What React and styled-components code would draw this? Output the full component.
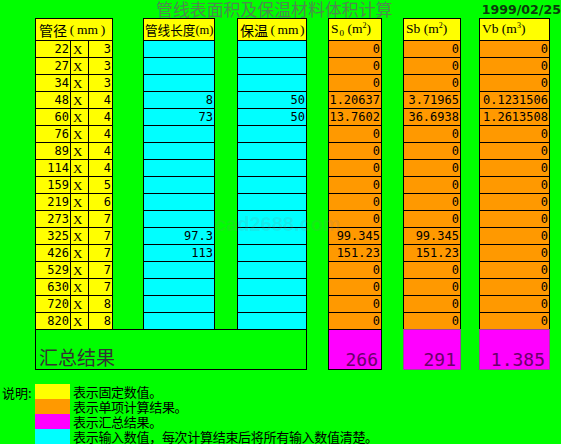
import React from "react";
import styled, { createGlobalStyle } from "styled-components";

const GlobalStyle = createGlobalStyle`
  html, body {
    margin: 0;
    padding: 0;
    background: #00ff00;
    overflow: hidden;
  }
  body {
    width: 561px;
    height: 444px;
    font-family: "Noto Sans CJK SC", sans-serif;
  }
`;

const YELLOW = "#ffff00";
const ORANGE = "#ff9900";
const CYAN = "#00ffff";
const MAGENTA = "#ff00ff";

const pipes = [
  [22, 3], [27, 3], [34, 3], [48, 4], [60, 4], [76, 4], [89, 4], [114, 4],
  [159, 5], [219, 6], [273, 7], [325, 7], [426, 7], [529, 7], [630, 7],
  [720, 8], [820, 8],
];
const lengths = { 3: "8", 4: "73", 11: "97.3", 12: "113" };
const insul = { 3: "50", 4: "50" };
const s0 = { 3: "1.20637", 4: "13.7602", 11: "99.345", 12: "151.23" };
const sb = { 3: "3.71965", 4: "36.6938", 11: "99.345", 12: "151.23" };
const vb = { 3: "0.1231506", 4: "1.2613508" };

const Page = styled.div`
  position: relative;
  width: 561px;
  height: 444px;
`;

const TitleBar = styled.div`
  display: flex;
  align-items: flex-start;
  height: 18px;
`;

const Title = styled.div`
  margin-left: 156px;
  font-size: 16.9px;
  line-height: 18px;
  color: #4f8a4f;
  white-space: nowrap;
`;

const DateText = styled.div`
  margin-left: auto;
  padding-top: 2px;
  font-family: "DejaVu Sans", sans-serif;
  font-weight: bold;
  font-size: 12.6px;
  line-height: 15px;
  color: #0b3b0b;
`;

const Sheet = styled.div`
  display: grid;
  grid-template-columns: 35px 18px 24px 31px 71px 23px 69px 22px 53px 22px 57px 19px 70px;
  grid-template-rows: 22px repeat(17, 17px) 40px;
  margin-left: 35px;
`;

const Cell = styled.div`
  grid-column: ${(p) => p.$col} / span ${(p) => p.$span || 1};
  grid-row: ${(p) => p.$row};
  margin: 0 -1px -1px 0;
  border: 1px solid #000;
  background: ${(p) => p.$bg};
  display: flex;
  align-items: center;
  justify-content: flex-end;
  padding: 0 1px 0 0;
  font-family: "DejaVu Sans Mono", monospace;
  font-size: 12px;
  line-height: 15px;
  color: #000;
  white-space: nowrap;
  overflow: hidden;
`;

const CrossCell = styled(Cell)`
  justify-content: flex-start;
  padding: 0 0 0 2px;
  font-family: "Liberation Serif", serif;
  font-size: 13px;
`;

const HeadCell = styled(Cell)`
  justify-content: flex-start;
  padding: 0 0 0 ${(p) => p.$pad || 2}px;
  font-family: "Noto Sans CJK SC", sans-serif;
  font-size: ${(p) => p.$size || 14}px;
  line-height: 18px;
`;

const Latin = styled.span`
  font-family: "Liberation Serif", serif;
  font-size: ${(p) => p.$size || 13.5}px;
`;

const Paren = styled.span`
  display: inline-block;
  width: ${(p) => p.$w || 10}px;
  text-align: center;
  font-family: "Liberation Serif", serif;
  font-size: 13.5px;
`;

const Sub = styled.span`
  font-size: 9px;
  position: relative;
  top: 3px;
  margin-left: 1px;
`;

const Sup = styled.span`
  font-size: 8px;
  position: relative;
  top: -5px;
`;

const TotalLabel = styled(Cell)`
  align-items: flex-end;
  justify-content: flex-start;
  padding: 0 0 1px 3px;
  background: transparent;
  font-family: "Noto Sans CJK SC", sans-serif;
  font-size: 19px;
  line-height: 22px;
  color: #333;
`;

const TotalValue = styled(Cell)`
  align-items: flex-end;
  padding: 0 ${(p) => p.$pad || 3}px 0 0;
  border-color: ${(p) => p.$edge || "#000"};
  background: ${MAGENTA};
  font-size: 18px;
  line-height: 18px;
  color: #6a006a;
`;

const Legend = styled.div`
  display: grid;
  grid-template-columns: 35px 35px auto;
  grid-auto-rows: 15px;
  margin-top: 15px;
`;

const LegendLabel = styled.div`
  grid-column: 1;
  grid-row: 1;
  padding: 1px 0 0 2px;
  font-size: 13px;
  line-height: 15px;
  color: #000;
  white-space: nowrap;
`;

const Swatch = styled.div`
  grid-column: 2;
  background: ${(p) => p.$bg};
`;

const LegendText = styled.div`
  grid-column: 3;
  padding-left: 3px;
  font-size: 13px;
  letter-spacing: -0.3px;
  line-height: 15px;
  color: #000;
  white-space: nowrap;
`;

const Watermark = styled.div`
  position: absolute;
  left: 215px;
  top: 213px;
  font-family: "Liberation Sans", sans-serif;
  font-weight: bold;
  font-size: 20px;
  color: rgba(128, 128, 128, 0.16);
  pointer-events: none;
`;

const legendRows = [
  [YELLOW, "表示固定数值。"],
  [ORANGE, "表示单项计算结果。"],
  [MAGENTA, "表示汇总结果。"],
  [CYAN, "表示输入数值，每次计算结束后将所有输入数值清楚。"],
];

const App = () => {
  return (
    <Page>
      <GlobalStyle />
      <TitleBar>
        <Title>管线表面积及保温材料体积计算</Title>
        <DateText>1999/02/25</DateText>
      </TitleBar>

      <Sheet>
        <HeadCell $col={1} $span={3} $row={1} $bg={YELLOW} $pad={3}>
          管径<Paren>(</Paren>
          <Latin>mm</Latin>
          <Paren>)</Paren>
        </HeadCell>
        <HeadCell $col={5} $row={1} $bg={YELLOW} $size={12.6} $pad={1}>
          管线长度<Latin $size={12.5}>(m)</Latin>
        </HeadCell>
        <HeadCell $col={7} $row={1} $bg={YELLOW}>
          保温<Paren>(</Paren>
          <Latin>mm</Latin>
          <Paren $w={8}>)</Paren>
        </HeadCell>
        <HeadCell $col={9} $row={1} $bg={YELLOW}>
          <Latin>
            S<Sub>0</Sub> (m<Sup>2</Sup>)
          </Latin>
        </HeadCell>
        <HeadCell $col={11} $row={1} $bg={YELLOW}>
          <Latin>
            Sb (m<Sup>2</Sup>)
          </Latin>
        </HeadCell>
        <HeadCell $col={13} $row={1} $bg={YELLOW}>
          <Latin>
            Vb (m<Sup>3</Sup>)
          </Latin>
        </HeadCell>

        {pipes.map(([d, t], i) => {
          const row = i + 2;
          return (
            <React.Fragment key={d}>
              <Cell $col={1} $row={row} $bg={YELLOW}>{d}</Cell>
              <CrossCell $col={2} $row={row} $bg={YELLOW}>X</CrossCell>
              <Cell $col={3} $row={row} $bg={YELLOW}>{t}</Cell>
              <Cell $col={5} $row={row} $bg={CYAN}>{lengths[i]}</Cell>
              <Cell $col={7} $row={row} $bg={CYAN}>{insul[i]}</Cell>
              <Cell $col={9} $row={row} $bg={ORANGE}>{s0[i] || "0"}</Cell>
              <Cell $col={11} $row={row} $bg={ORANGE}>{sb[i] || "0"}</Cell>
              <Cell $col={13} $row={row} $bg={ORANGE}>{vb[i] || "0"}</Cell>
            </React.Fragment>
          );
        })}

        <TotalLabel $col={1} $span={7} $row={19}>汇总结果</TotalLabel>
        <TotalValue $col={9} $row={19}>266</TotalValue>
        <TotalValue $col={11} $row={19} $edge="#9a4a9a" $pad={4}>291</TotalValue>
        <TotalValue $col={13} $row={19} $edge="#9a4a9a" $pad={4}>1.385</TotalValue>
      </Sheet>

      <Legend>
        <LegendLabel>说明:</LegendLabel>
        {legendRows.map(([bg, text]) => (
          <React.Fragment key={text}>
            <Swatch $bg={bg} />
            <LegendText>{text}</LegendText>
          </React.Fragment>
        ))}
      </Legend>

      <Watermark>cad2688.com</Watermark>
    </Page>
  );
};

export default App;
